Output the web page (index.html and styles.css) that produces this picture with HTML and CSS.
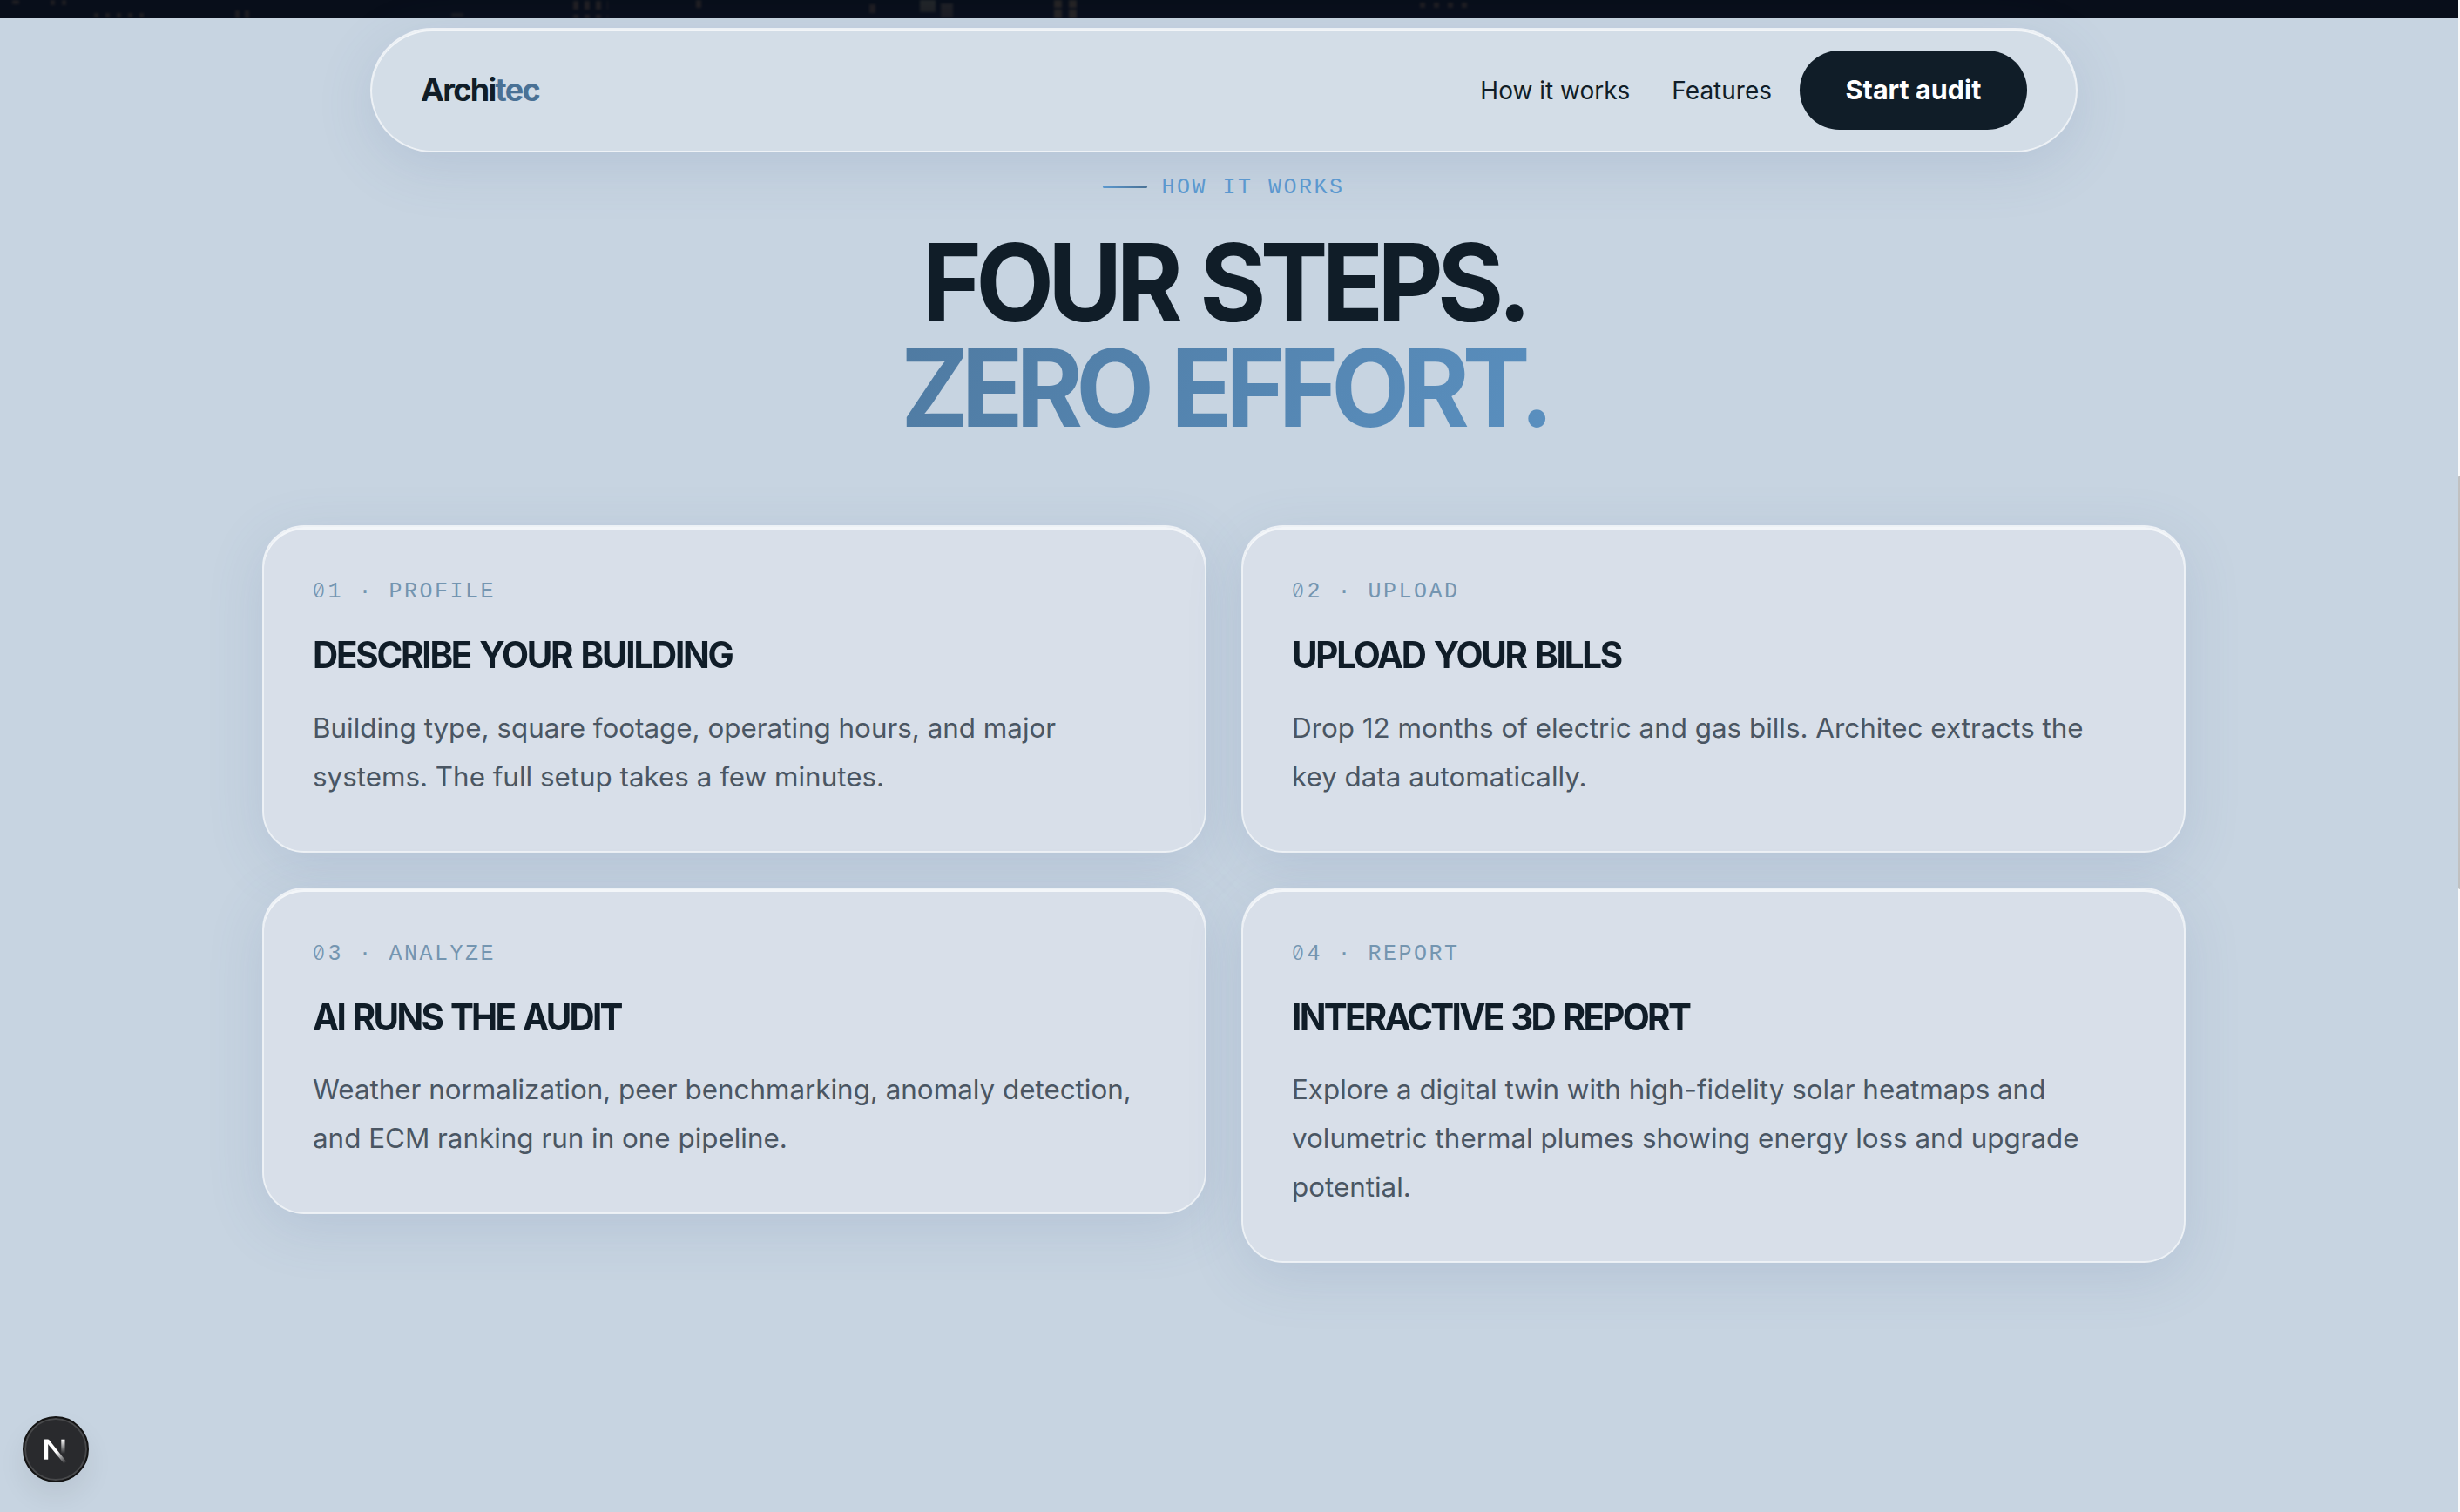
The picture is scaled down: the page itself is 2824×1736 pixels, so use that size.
FILE: index.html
```
<!DOCTYPE html>
<html lang="en">
<head>
    <meta charset="UTF-8">
    <meta name="viewport" content="width=device-width, initial-scale=1.0">
    <title>Architec</title>
    <link rel="stylesheet" href="styles.css">
</head>
<body>
    <div class="hero-edge">
        <div class="city-lights"></div>
    </div>
    <header class="navbar">
        <a class="logo">Archi<span>tec</span></a>
        <nav class="nav-links">
            <a class="nav-link">How it works</a>
            <a class="nav-link">Features</a>
            <a class="nav-button">Start audit</a>
        </nav>
    </header>
    <main class="how-section">
        <div class="eyebrow"><span class="eyebrow-line"></span><span class="eyebrow-text">How it works</span></div>
        <h2 class="headline">Four steps.<br><span class="accent">Zero effort.</span></h2>
        <div class="steps">
            <article class="card">
                <div class="step-label"><span class="zero">0</span>1 · Profile</div>
                <h3>Describe your building</h3>
                <p>Building type, square footage, operating hours, and major systems. The full setup takes a few minutes.</p>
            </article>
            <article class="card">
                <div class="step-label"><span class="zero">0</span>2 · Upload</div>
                <h3>Upload your bills</h3>
                <p>Drop 12 months of electric and gas bills. Architec extracts the key data automatically.</p>
            </article>
            <article class="card">
                <div class="step-label"><span class="zero">0</span>3 · Analyze</div>
                <h3 class="tight">AI runs the audit</h3>
                <p>Weather normalization, peer benchmarking, anomaly detection, and ECM ranking run in one pipeline.</p>
            </article>
            <article class="card">
                <div class="step-label"><span class="zero">0</span>4 · Report</div>
                <h3 class="tight">Interactive 3D report</h3>
                <p>Explore a digital twin with high-fidelity solar heatmaps and volumetric thermal plumes showing energy loss and upgrade potential.</p>
            </article>
        </div>
    </main>
    <div class="scrollbar"><div class="scrollbar-thumb"></div></div>
    <div class="dev-badge">
        <svg width="28" height="34" viewBox="0 0 28 34">
            <defs>
                <linearGradient id="diagonal" x1="15" y1="20" x2="25" y2="33" gradientUnits="userSpaceOnUse">
                    <stop offset="0" stop-color="#fff"/>
                    <stop offset="1" stop-color="#fff" stop-opacity="0"/>
                </linearGradient>
                <linearGradient id="stem" x1="0" y1="6" x2="0" y2="22" gradientUnits="userSpaceOnUse">
                    <stop offset="0" stop-color="#fff"/>
                    <stop offset="1" stop-color="#fff" stop-opacity="0"/>
                </linearGradient>
            </defs>
            <rect x="1" y="5.700" width="4.200" height="23" fill="#fff"/>
            <path d="M1 5.700H6L26.500 31.500L23.500 33.500L3 8.500Z" fill="url(#diagonal)"/>
            <rect x="20.300" y="5.700" width="4.200" height="16.300" fill="url(#stem)"/>
        </svg>
    </div>
</body>
</html>
```

FILE: styles.css
```
* {
    box-sizing: border-box;
}
body {
    margin: 0;
    padding: 0 14px 0 0;
    height: 1736px;
    overflow: hidden;
    background-color: #c7d4e1;
    color: #101d28;
    font-family: Inter, "Liberation Sans", sans-serif;
}
.hero-edge {
    height: 21px;
    margin-right: -14px;
    overflow: hidden;
    background-color: #080e1a;
}
.city-lights {
    height: 21px;
    opacity: 0.25;
    filter: blur(1.5px);
    background-image:
        linear-gradient(#5f4a3a, #5f4a3a),
        repeating-linear-gradient(90deg, #5f4a3a 0 5px, transparent 5px 13px),
        repeating-linear-gradient(90deg, #5f4a3a 0 5px, transparent 5px 13px),
        repeating-linear-gradient(90deg, #5f4a3a 0 5px, transparent 5px 11px),
        linear-gradient(#4a4038, #4a4038),
        repeating-linear-gradient(90deg, #6b5340 0 6px, transparent 6px 13px),
        repeating-linear-gradient(90deg, #6b5340 0 6px, transparent 6px 13px),
        linear-gradient(#6b5340, #6b5340),
        linear-gradient(#5f4a3a, #5f4a3a),
        linear-gradient(#74705a, #5b5544),
        linear-gradient(#5f5548, #4a4038),
        repeating-linear-gradient(90deg, #7a6245 0 9px, transparent 9px 17px),
        repeating-linear-gradient(90deg, #7a6245 0 9px, transparent 9px 17px),
        repeating-linear-gradient(90deg, #5f4a3a 0 6px, transparent 6px 16px);
    background-repeat: no-repeat;
    background-size: 8px 5px, 24px 6px, 60px 5px, 20px 9px, 14px 4px, 40px 10px, 40px 4px, 6px 9px, 7px 10px, 18px 14px, 14px 16px, 26px 9px, 26px 10px, 54px 6px;
    background-position: 14px 0, 58px 0, 108px 15px, 270px 12px, 518px 15px, 658px 1px, 658px 17px, 799px 0, 998px 5px, 1056px 0, 1080px 4px, 1210px 0, 1210px 11px, 1630px 3px;
}
.navbar {
    display: flex;
    align-items: center;
    justify-content: space-between;
    width: 1960px;
    height: 143px;
    margin: 11px auto 0;
    padding: 0 56px;
    border: 2px solid rgba(255, 255, 255, 0.7);
    border-radius: 72px;
    background-color: #d3dde7;
    background-clip: padding-box;
    box-shadow: inset 0 2px 0 rgba(255, 255, 255, 0.7), 0 16px 64px rgba(80, 105, 155, 0.15);
}
.logo {
    margin-top: -2px;
    font-size: 36px;
    font-weight: 700;
    letter-spacing: -1.7px;
}
.logo span {
    color: #4a7195;
}
.nav-links {
    display: flex;
    align-items: center;
}
.nav-link {
    margin-right: 48px;
    font-size: 28px;
}
.nav-link + .nav-link {
    margin-right: 32px;
}
.nav-button {
    width: 261px;
    height: 91px;
    border-radius: 46px;
    background-color: #101d28;
    color: #fff;
    font-size: 30.5px;
    font-weight: 700;
    line-height: 90px;
    text-align: center;
}
.eyebrow {
    display: flex;
    align-items: center;
    justify-content: center;
    gap: 16px;
    height: 30px;
    margin-top: 24px;
    color: #5b98cf;
}
.eyebrow-line {
    width: 51px;
    height: 3px;
    border-radius: 2px;
    background: linear-gradient(90deg, #5b98cf, #4a7195);
}
.eyebrow-text,
.step-label {
    font-family: "Liberation Mono", monospace;
    font-size: 25px;
    letter-spacing: 2.5px;
    line-height: 37px;
    text-transform: uppercase;
}
.eyebrow-text {
    padding-top: 3px;
}
.headline {
    margin: 35px 0 0;
    font-size: 124px;
    font-weight: 700;
    letter-spacing: -7.4px;
    word-spacing: 6px;
    line-height: 121px;
    text-align: center;
    text-transform: uppercase;
    font-feature-settings: "ss08";
    transform: scaleX(0.94);
}
.accent {
    padding-right: 9px;
    margin-right: -9px;
    background: linear-gradient(135deg, #4f7aa1, #5a90c0);
    background-clip: text;
    -webkit-background-clip: text;
    color: transparent;
    letter-spacing: -8.4px;
    word-spacing: 8px;
}
.steps {
    display: grid;
    grid-template-columns: 1084px 1084px;
    align-items: start;
    justify-content: center;
    gap: 40px;
    margin-top: 97px;
}
.card {
    padding: 56px 56px 57px;
    border: 2px solid rgba(255, 255, 255, 0.7);
    border-radius: 48px;
    background-color: #d8dfe9;
    background-clip: padding-box;
    box-shadow: inset 0 3px 0 rgba(255, 255, 255, 0.7), 0 16px 64px rgba(80, 105, 155, 0.15);
}
.step-label {
    height: 30px;
    color: #7495b0;
}
.zero {
    display: inline-block;
    width: 17.6px;
    font-family: Inter, sans-serif;
    font-size: 22.5px;
    font-weight: 300;
    font-feature-settings: "zero";
    letter-spacing: 0;
    line-height: 1;
}
.card h3 {
    margin: 35px 0 0;
    font-size: 42px;
    font-weight: 700;
    letter-spacing: -2.3px;
    word-spacing: 3px;
    line-height: 52px;
    text-transform: uppercase;
    transform: scaleX(0.96);
    transform-origin: left;
}
.card h3.tight {
    letter-spacing: -2.8px;
}
.card p {
    max-width: 950px;
    margin: 29.5px 0 0;
    color: #4a5663;
    font-size: 31.36px;
    line-height: 56px;
}
.scrollbar {
    position: absolute;
    top: 0;
    right: 0;
    width: 2px;
    height: 1736px;
    padding-top: 546px;
    background-color: #fafafa;
}
.scrollbar-thumb {
    height: 475px;
    border-radius: 2px 0 0 2px;
    background-color: #c1c1c1;
}
.dev-badge {
    position: absolute;
    left: 26px;
    top: 1626px;
    display: flex;
    align-items: center;
    justify-content: center;
    width: 76px;
    height: 76px;
    border: 2px solid #141414;
    border-radius: 50%;
    background-color: #292a2d;
    box-shadow: inset 0 0 0 2px #47484a, 0 16px 32px rgba(0, 0, 0, 0.07);
}
```
